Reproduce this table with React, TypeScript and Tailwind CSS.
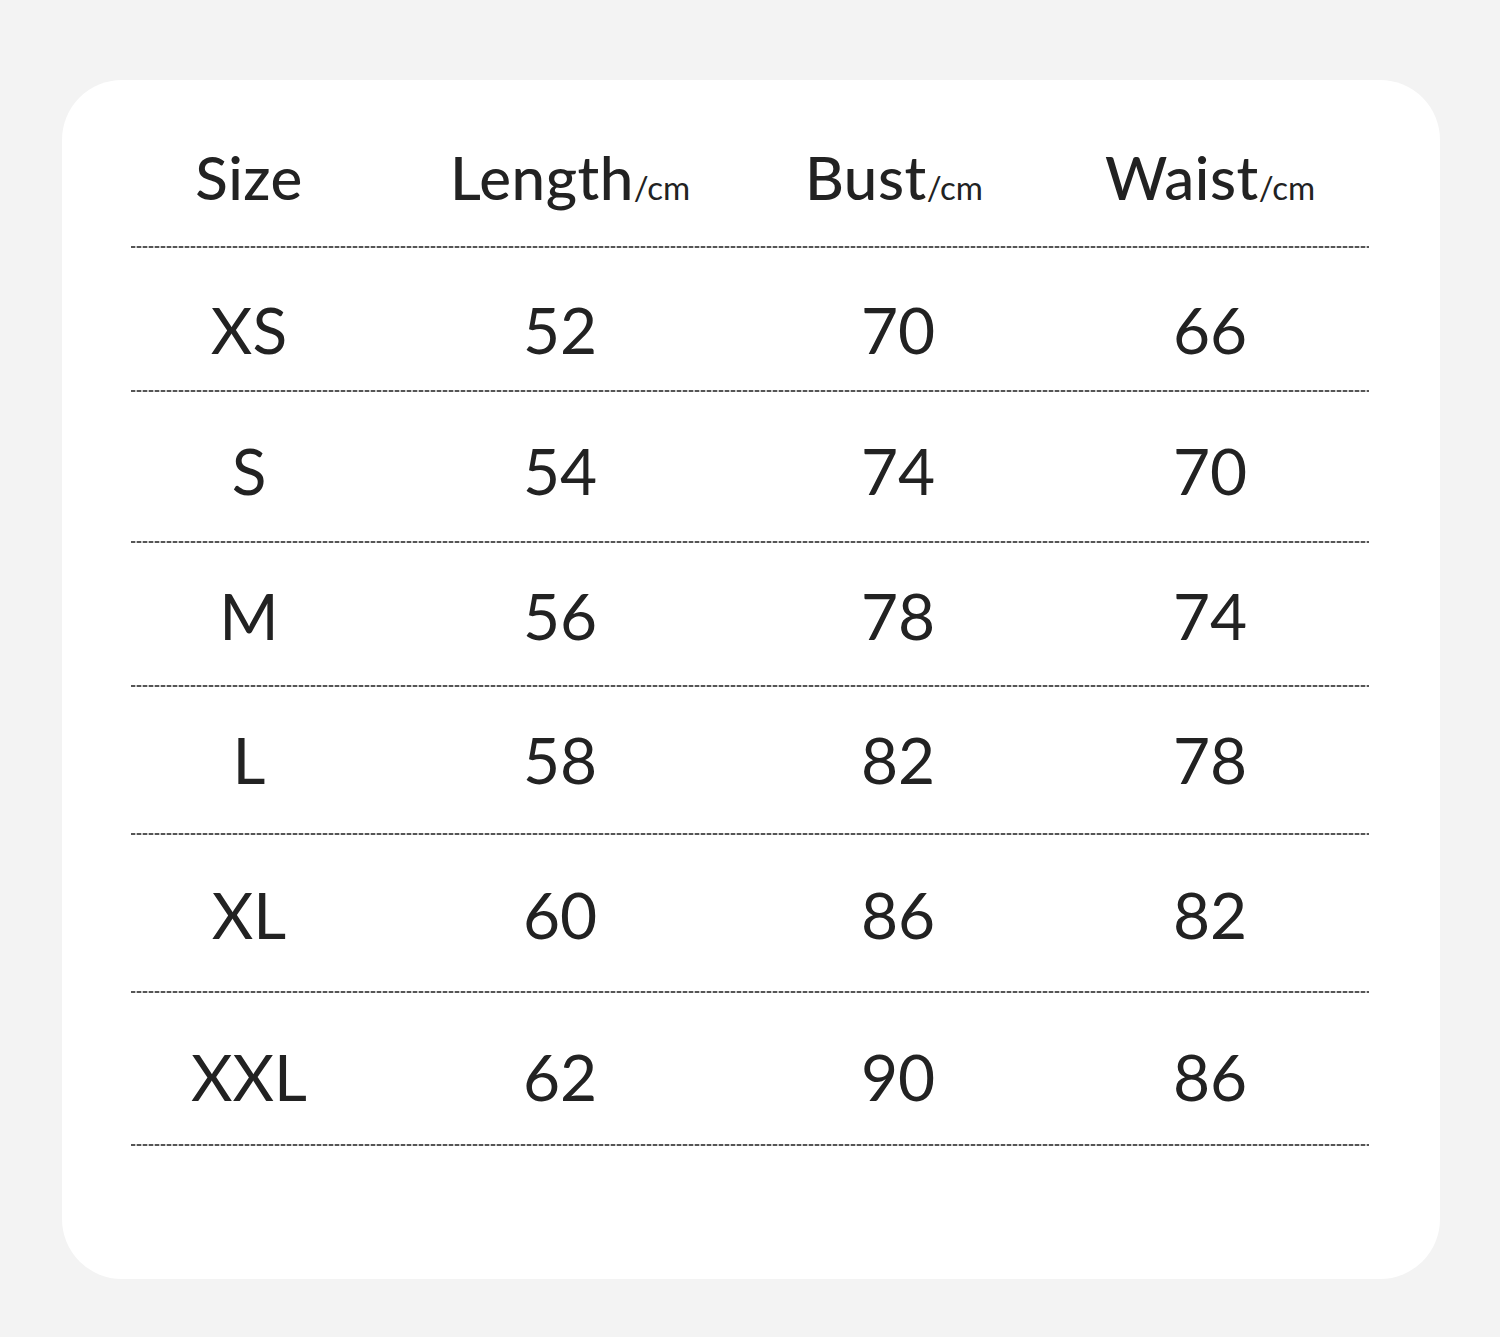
import React from "react";

const ROWS = [
  { size: "XS", length: "52", bust: "70", waist: "66", cls: "h-[142px] pt-[22px]" },
  { size: "S", length: "54", bust: "74", waist: "70", cls: "h-[149px] pt-[9px]" },
  { size: "M", length: "56", bust: "78", waist: "74", cls: "h-[142px] pt-[3px]" },
  { size: "L", length: "58", bust: "82", waist: "78", cls: "h-[146px] pt-0" },
  { size: "XL", length: "60", bust: "86", waist: "82", cls: "h-[156px] pt-[4px]" },
  { size: "XXL", length: "62", bust: "90", waist: "86", cls: "h-[151px] pt-[17px]" },
];

const GRID = "grid grid-cols-[236px_386px_290px_334px]";

function Dashed() {
  return (
    <div className="h-[2px] w-full bg-[repeating-linear-gradient(90deg,#555_0px,#555_4px,#c8c8c8_4px,#c8c8c8_6px)]" />
  );
}

function Head({ label, unit, className = "" }: { label: string; unit?: string; className?: string }) {
  return (
    <div className={`flex items-baseline justify-center ${className}`}>
      <span className="text-[60px] font-medium leading-none tracking-[0.5px]">{label}</span>
      {unit && <span className="text-[33px] leading-none">{unit}</span>}
    </div>
  );
}

export default function App() {
  return (
    <div className="min-h-[1337px] w-full bg-[#f3f3f3] pt-[80px] pl-[62px] font-['Lato','Noto_Sans',sans-serif] text-[#222]">
      <div className="w-[1378px] h-[1199px] rounded-[60px] bg-white pl-[69px]">
        <div className="w-[1238px]">
          {/* header */}
          <div className={`${GRID} h-[166px] pt-[67px]`}>
            <Head label="Size" />
            <Head label="Length" unit="/cm" className="pl-[20px]" />
            <Head label="Bust" unit="/cm" className="pr-[8px]" />
            <Head label="Waist" unit="/cm" />
          </div>
          <Dashed />

          {ROWS.map((r) => (
            <div key={r.size}>
              <div className={`${GRID} items-center ${r.cls} text-[64px] leading-none`}>
                <div className="text-center">{r.size}</div>
                <div className="text-center">{r.length}</div>
                <div className="text-center">{r.bust}</div>
                <div className="text-center">{r.waist}</div>
              </div>
              <Dashed />
            </div>
          ))}
        </div>
      </div>
    </div>
  );
}
